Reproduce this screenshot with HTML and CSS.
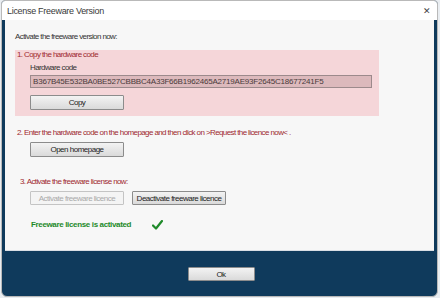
FILE: index.html
```html
<!DOCTYPE html>
<html lang="en">
  <head>
    <meta charset="UTF-8" />
    <title>License Freeware Version</title>
    <link rel="stylesheet" href="styles.css">
  </head>
  <body>
    <div class="window">
      <div class="titlebar">
        <span class="title">License Freeware Version</span>
        <span class="close">&#x2715;</span>
      </div>
      <div class="frame">
        <div class="panel">
          <p class="intro">Activate the freeware version now:</p>

          <div class="step-box">
            <p class="step">1. Copy the hardware code</p>
            <div class="inner">
              <label>Hardware code</label>
              <input class="code" type="text" readonly value="B367B45E532BA0BE527CBBBC4A33F66B1962465A2719AE93F2645C18677241F5" />
              <button class="btn">Copy</button>
            </div>
          </div>

          <p class="step step-two">2. Enter the hardware code on the homepage and then click on &gt;Request the licence now&lt; .</p>
          <div class="inner">
            <button class="btn">Open homepage</button>
          </div>

          <p class="step step-three">3. Activate the freeware license now:</p>
          <div class="inner row">
            <button class="btn" disabled>Activate freeware licence</button>
            <button class="btn">Deactivate freeware licence</button>
          </div>

          <div class="inner status">
            <span>Freeware license is activated</span>
            <svg width="11" height="10" viewBox="0 0 11 10">
              <path d="M1 5.5 L4 8.5 L10 1" fill="none" stroke="#1f8a2a" stroke-width="2.2" stroke-linecap="round" stroke-linejoin="round" />
            </svg>
          </div>
        </div>
        <div class="footer">
          <button class="btn ok">Ok</button>
        </div>
      </div>
    </div>
  </body>
</html>
```

FILE: styles.css
```css
* {
  box-sizing: border-box;
  margin: 0;
  padding: 0;
  font-family: "Liberation Sans", Arial, sans-serif;
}
body {
  background-color: #e9edf1;
  width: 440px;
  height: 298px;
  overflow: hidden;
}
.window {
  margin-left: 1px;
  width: 437px;
  height: 297px;
  border: 1px solid #b9b9b9;
  border-radius: 4px 4px 6px 6px;
  overflow: hidden;
  display: flex;
  flex-direction: column;
  background-color: #0f3a5c;
}
.titlebar {
  height: 19px;
  background-color: #ffffff;
  display: flex;
  align-items: center;
  justify-content: space-between;
  padding: 0 6px 0 5px;
}
.title {
  font-size: 9px;
  letter-spacing: -0.3px;
  color: #3a3a3a;
}
.close {
  font-size: 9px;
  color: #444444;
}
.frame {
  flex: 1;
  display: flex;
  flex-direction: column;
  padding: 0 3px;
}
.panel {
  height: 231px;
  background-color: #f7f7f7;
  padding: 12px 10px 0 10px;
  display: flex;
  flex-direction: column;
  border-bottom: 1px solid #d9dee4;
}
p,
label,
.status span {
  font-size: 8px;
  line-height: 10px;
  letter-spacing: -0.6px;
  color: #333333;
}
.intro {
  margin-bottom: 8px;
}
.step-box {
  width: 364px;
  background-color: #f5d6d9;
  padding: 0 7px 6px 2px;
}
.step {
  color: #a02a30;
}
.step-box .inner {
  padding-left: 13px;
  display: flex;
  flex-direction: column;
  align-items: flex-start;
}
label {
  margin-top: 3px;
}
.code {
  margin-top: 2px;
  width: 100%;
  height: 13px;
  border: 1px solid #9c8a8c;
  background-color: #dcb9bc;
  font-size: 8px;
  letter-spacing: -0.2px;
  color: #4a3a3b;
  padding: 0 2px;
  outline: none;
}
.btn {
  width: 94px;
  height: 15px;
  border: 1px solid #8c8c8c;
  border-radius: 1px;
  background: linear-gradient(#f3f3f3, #dadada);
  font-size: 8px;
  letter-spacing: -0.5px;
  color: #222222;
}
.step-box .btn {
  margin-top: 7px;
}
.step-two {
  margin-top: 12px;
  padding-left: 2px;
}
.inner {
  padding-left: 15px;
}
.panel > .inner .btn {
  margin-top: 3px;
}
.step-three {
  margin-top: 20px;
  padding-left: 5px;
}
.row {
  display: flex;
  gap: 8px;
}
.row .btn {
  height: 14px;
  margin-top: 4px !important;
}
.btn:disabled {
  border-color: #c4c4c4;
  background: #f4f4f4;
  color: #a9a9a9;
}
.status {
  margin-top: 15px;
  padding-left: 16px;
  display: flex;
  align-items: center;
  gap: 21px;
}
.status span {
  font-weight: bold;
  color: #1f8a2a;
  letter-spacing: -0.35px;
}
.footer {
  flex: 1;
  display: flex;
  justify-content: center;
  padding-top: 16px;
}
.ok {
  width: 67px;
  height: 14px;
  margin-left: 3px;
}
```
